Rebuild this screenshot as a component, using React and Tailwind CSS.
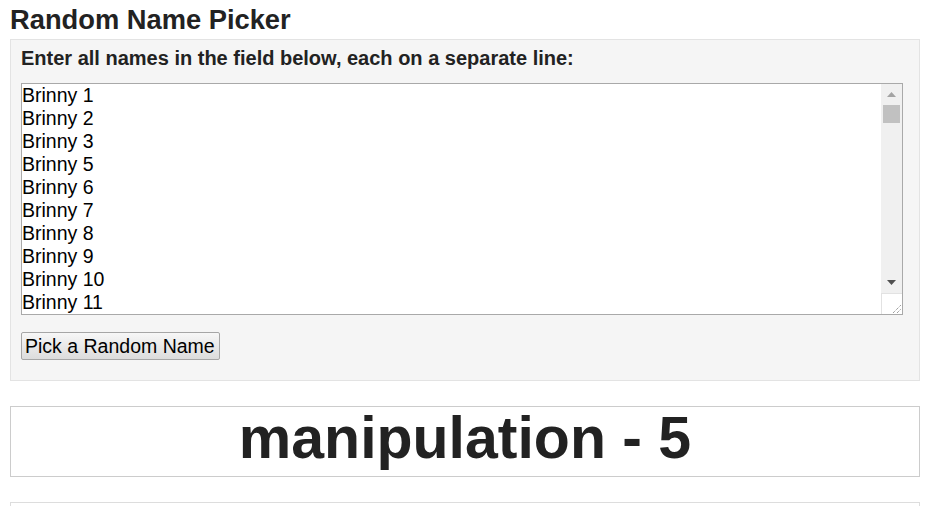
import { useState } from "react"

const names = [1, 2, 3, 5, 6, 7, 8, 9, 10, 11]
  .concat(Array.from({ length: 90 }, (_, i) => i + 12))
  .map((n) => `Brinny ${n}`)
  .join("\n")

// hand-drawn scrollbar, headless chrome hides the native one
function Scrollbar() {
  return (
    <div className="w-[21px] h-full flex flex-col bg-[#f0f0f0]">
      <div className="h-[21px] flex items-center justify-center">
        <svg width="9" height="5" viewBox="0 0 9 5">
          <path d="M4.5 0 L9 5 L0 5 Z" fill="#a3a3a3" />
        </svg>
      </div>
      <div className="flex-1 px-[2px]">
        <div className="h-[18px] bg-[#c1c1c1]" />
      </div>
      <div className="h-[21px] flex items-center justify-center">
        <svg width="9" height="5" viewBox="0 0 9 5">
          <path d="M0 0 L9 0 L4.5 5 Z" fill="#505050" />
        </svg>
      </div>
      <div className="h-[21px] bg-white border-t border-l border-[#e2e2e2] flex items-end justify-end">
        <svg width="12" height="12" viewBox="0 0 12 12">
          <path d="M3 11 L11 3 M7 11 L11 7" stroke="#777" strokeWidth="1" strokeDasharray="1 1" />
        </svg>
      </div>
    </div>
  )
}

export default function App() {
  const [picked, setPicked] = useState("manipulation - 5")

  const pick = () => {
    const list = names.split("\n").filter(Boolean)
    setPicked(list[Math.floor(Math.random() * list.length)])
  }

  return (
    <div className="min-h-screen bg-white pl-[10px] pr-[21px] text-[#222] font-['Liberation_Sans',Arial,sans-serif]">
      <h1 className="text-[27.3px] font-bold leading-[39px] h-[39px]">Random Name Picker</h1>

      <div className="border border-[#e3e3e3] bg-[#f5f5f5] pl-[10px] pt-[7px] pb-[20px]">
        <label className="block text-[20px] font-bold leading-[23px] mb-[13px]">
          Enter all names in the field below, each on a separate line:
        </label>
        <div className="flex w-[882px] h-[232px] border border-[#a9a9a9] bg-white">
          <textarea
            defaultValue={names}
            spellCheck={false}
            className="flex-1 h-full bg-white p-0 text-[19.5px] leading-[23px] text-black overflow-hidden resize-none focus:outline-none"
          />
          <Scrollbar />
        </div>
        <button
          onClick={pick}
          className="mt-[17px] h-[28px] w-[199px] border border-[#a6a6a6] rounded-[2px] bg-gradient-to-b from-[#f7f7f7] to-[#dcdcdc] px-[3px] text-left text-[19.5px] leading-[23px] text-black"
        >
          Pick a Random Name
        </button>
      </div>

      <div className="mt-[25px] border border-[#cccccc] bg-white h-[71px] text-center text-[59px] font-bold leading-[63px]">
        {picked}
      </div>

      <div className="mt-[25px] border border-[#dddddd] bg-white h-[71px]" />
    </div>
  )
}
